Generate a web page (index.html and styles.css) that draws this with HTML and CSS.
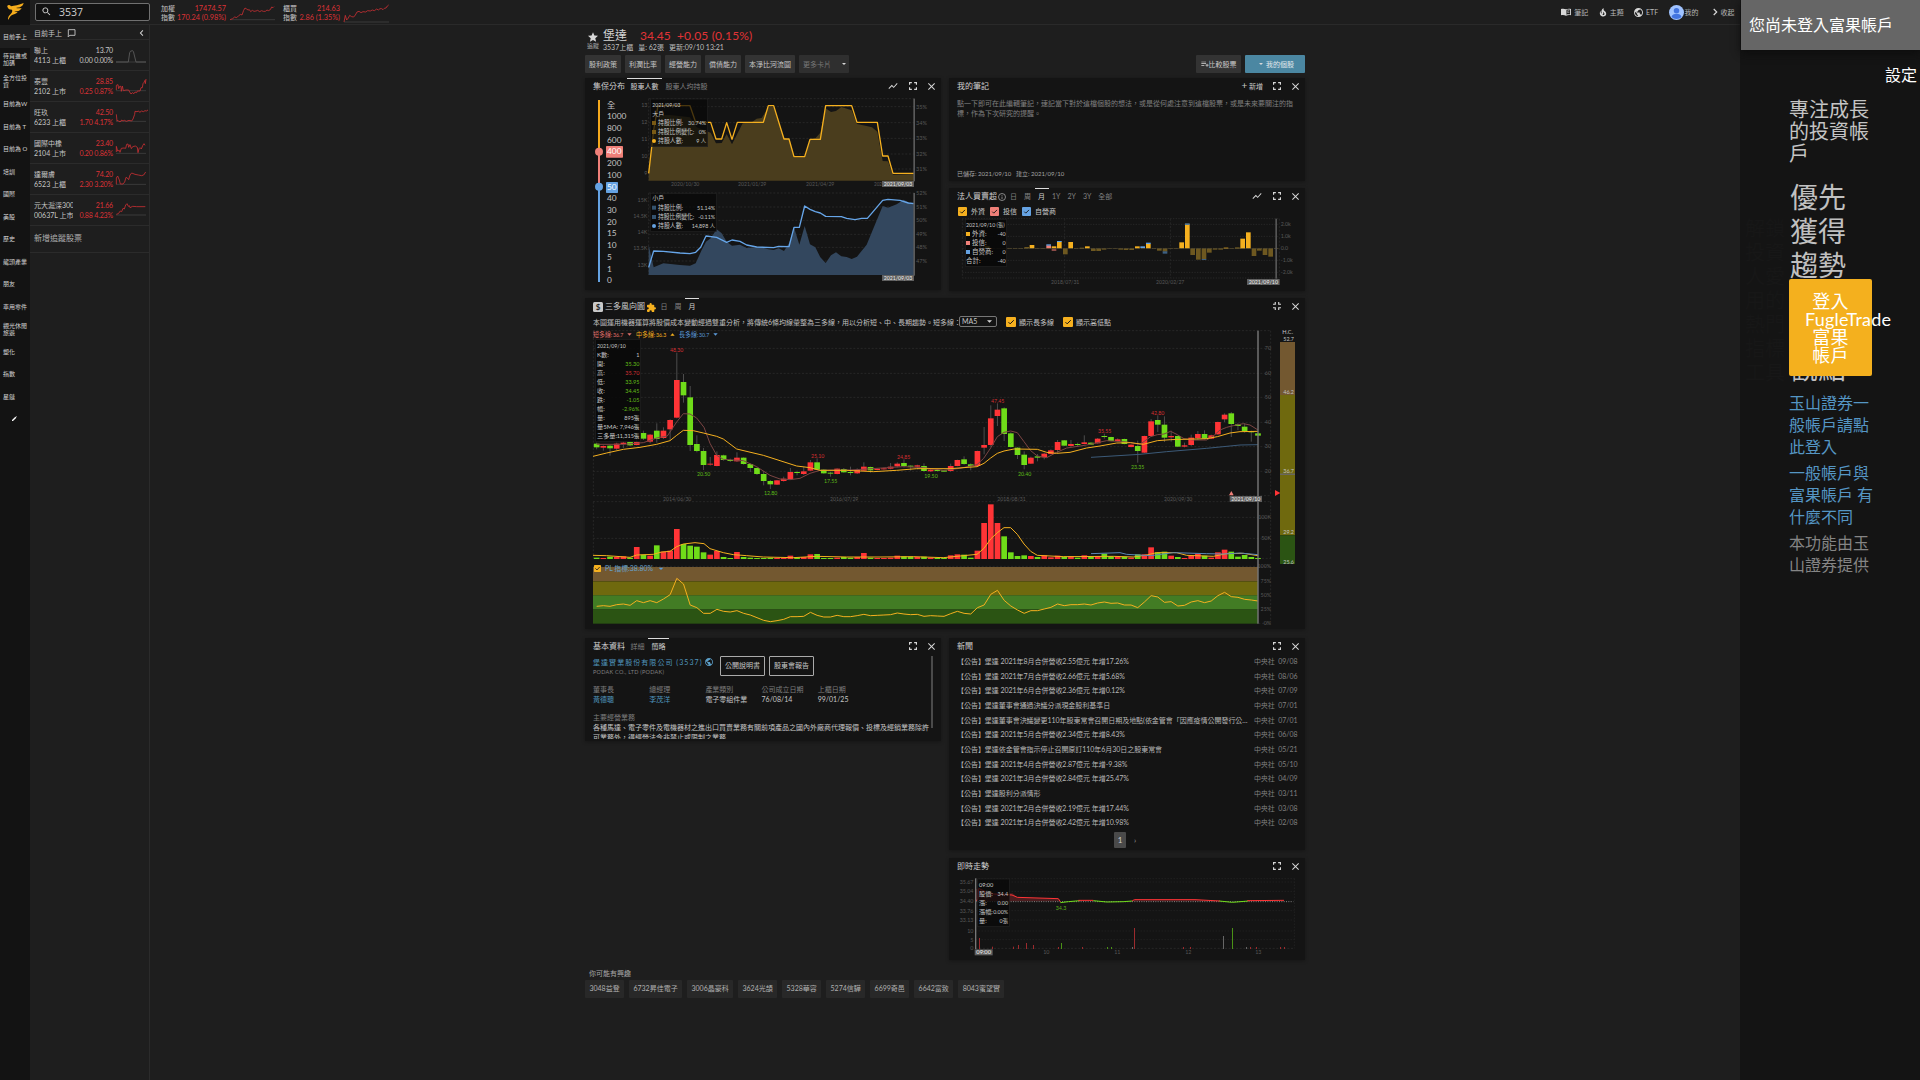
FILE: index.html
```html
<!DOCTYPE html>
<html lang="zh-Hant">
<head>
<meta charset="utf-8">
<title>堡達 3537</title>
<link rel="stylesheet" href="styles.css">
</head>
<body>
<svg class="defs" width="0" height="0">
  <symbol id="i-full" viewBox="5 5 14 14"><path d="M7 14H5v5h5v-2H7v-3zm-2-4h2V7h3V5H5v5zm12 7h-3v2h5v-5h-2v3zM14 5v2h3v3h2V5h-5z"/></symbol>
  <symbol id="i-fullexit" viewBox="5 5 14 14"><path d="M5 16h3v3h2v-5H5v2zm3-8H5v2h5V5H8v3zm6 11h2v-3h3v-2h-5v5zm2-11V5h-2v5h5V8h-3z"/></symbol>
  <symbol id="i-close" viewBox="5 5 14 14"><path d="M19 6.4 17.6 5 12 10.6 6.4 5 5 6.4 10.6 12 5 17.6 6.4 19l5.600-5.600 5.600 5.600 1.400-1.400-5.600-5.600z"/></symbol>
  <symbol id="i-line" viewBox="1 4 22 16"><path d="M3.5 18.500l6-6 4 4L22 6.920l-1.400-1.400-7.100 8-4-4L2 17z"/></symbol>
  <symbol id="i-search" viewBox="2 2 20 20"><path d="M15.500 14h-.8l-.3-.3A6.500 6.500 0 1 0 13.700 14.400l.3.3v.8l5 5 1.500-1.500-5-5zm-6 0a4.500 4.500 0 1 1 0-9 4.500 4.500 0 0 1 0 9z"/></symbol>
  <symbol id="i-globe" viewBox="2 2 20 20"><path d="M12 2C6.480 2 2 6.480 2 12s4.480 10 10 10 10-4.480 10-10S17.520 2 12 2zm-1 17.930c-3.950-.49-7-3.850-7-7.930 0-.62.08-1.210.21-1.790L9 15v1c0 1.100.9 2 2 2v1.930zm6.900-2.540c-.26-.81-1-1.390-1.900-1.390h-1v-3c0-.55-.45-1-1-1H8v-2h2c.55 0 1-.45 1-1V7h2c1.100 0 2-.9 2-2v-.41c2.930 1.190 5 4.060 5 7.410 0 2.080-.8 3.970-2.100 5.390z"/></symbol>
  <symbol id="i-book" viewBox="1 4 22 16"><path d="M12 6C8 4.500 4 4.500 1 5.500v13.500c3-1 7-1 11 1 4-2 8-2 11-1V5.500C20 4.500 16 4.500 12 6zm9 11.500c-3-.6-6-.2-8 .7V7.500c2-.9 5-1.300 8-.7z"/><path d="M14.500 9.500q2.500-.9 5-.6v1.300q-2.500-.3-5 .6zm0 3q2.500-.9 5-.6v1.300q-2.500-.3-5 .6z"/></symbol>
  <symbol id="i-fire" viewBox="2 1 20 22"><path d="M19.480 12.350c-1.570-4.080-7.160-4.300-5.810-10.230.1-.44-.37-.78-.75-.55C9.290 3.710 6.680 8 8.870 13.620c.18.46-.36.89-.75.59-1.810-1.370-2-3.340-1.840-4.750.06-.52-.62-.77-.91-.34C4.690 10.160 4 11.840 4 14.370c.38 5.600 5.110 7.320 6.810 7.540 2.430.31 5.060-.14 6.950-1.870 2.080-1.930 2.840-5.010 1.720-7.690zm-9.280 5.030c1.440-.35 2.180-1.390 2.380-2.310.33-1.430-.96-2.830-.09-5.090.33 1.870 3.270 3.040 3.270 5.080.08 2.530-2.660 4.700-5.560 2.320z"/></symbol>
  <symbol id="i-right" viewBox="6 5 10 14"><path d="M8 7.500 9.500 6l6 6-6 6L8 16.500l4.500-4.500z"/></symbol>
  <symbol id="i-left" viewBox="6 5 10 14"><path d="m14.500 7.500-1.300-1.300L7.500 12l5.700 5.800 1.300-1.300-4.400-4.500z"/></symbol>
  <symbol id="i-star" viewBox="2 2 20 19"><path d="M12 17.270 18.180 21l-1.640-7.030L22 9.240l-7.190-.61L12 2 9.190 8.630 2 9.240l5.460 4.730L5.820 21z"/></symbol>
  <symbol id="i-puzzle" viewBox="2 1 21 21"><path d="M20.500 11H19V7a2 2 0 0 0-2-2h-4V3.500a2.500 2.500 0 0 0-5 0V5H4a2 2 0 0 0-2 2v3.800h1.500a2.700 2.700 0 0 1 0 5.400H2V20c0 1.100.9 2 2 2h3.800v-1.500a2.700 2.700 0 0 1 5.400 0V22H17a2 2 0 0 0 2-2v-4h1.500a2.500 2.500 0 0 0 0-5z"/></symbol>
  <symbol id="i-check" viewBox="0 0 18 18"><rect width="18" height="18" rx="2"/><path d="m4.500 9.300 3 3 6.500-6.500" fill="none" stroke="#141414" stroke-width="1.800"/></symbol>
  <symbol id="i-down" viewBox="0 0 10 5"><path d="M0 0h10L5 5z"/></symbol>
  <symbol id="i-add" viewBox="0 0 24 16"><path d="M1 1h14v2H1zm0 5h14v2H1zm0 5h9v2H1zm16-4h2.200v3.500H23v2h-3.800V16H17v-3.500h-3.500v-2H17z"/></symbol>
</svg>

<div class="app">
  <nav class="rail">
    <div class="logo"><svg width="17" height="17" viewBox="0 0 51 51"><path fill="#f6ad1c" d="M1 8c4-3 8-2 11 2C22 8 36 6 50 0c-1 6-5 10-10 12-5 2-9 2-13 3 6 1 11 1 17 0-3 6-8 9-14 10h-8c3 2 6 2 10 2-5 7-12 7-17 9-6 3-8 10-12 15-1-8 3-13 8-18 4-4 6-9 4-13-7 0-11-2-14-9z"/></svg></div>
    <ul class="groups" id="groups"></ul>
    <svg class="pencil" width="5" height="5" viewBox="0 0 15 15"><path fill="#fff" d="M0 12 10 2l3 3L3 15H0zM11 1l1-1 3 3-1 1z"/></svg>
  </nav>

  <div class="body">
    <header class="topbar">
      <label class="search"><svg width="9" height="9"><use href="#i-search"/></svg><span>3537</span></label>
      <div class="index i1">
        <div class="iname">加權<br>指數</div>
        <div class="ival">17474.57<br>170.24 (0.98%)</div>
        <svg class="spark" width="45" height="18" viewBox="690 8 135 54"><path class="base" d="M690 55h135"/><path class="up" d="M690 55l8-3 6-5 6 2 6-6 6-4 4 2 5-14 4-7 5 3 4 3 4-1 4 6 5-4 5 3 6-1 5-2 6 4 6-3 5 2 6 0 5-4 4 2 6-3 4-8 4 2 3-3"/></svg>
      </div>
      <div class="index i2">
        <div class="iname">櫃買<br>指數</div>
        <div class="ival">214.63<br>2.86 (1.35%)</div>
        <svg class="spark" width="45" height="18" viewBox="1032 8 135 54"><path class="base" d="M1032 62h135"/><path class="up" d="M1032 62l4-20 4 14 5-6 4-8 6 4 6 1 5-6 5-9 6-2 6 4 6-3 8 1 6-4 8 1 6-3 6 2 7-5 5 3 5-4 5 0 4 3 4-4 5-1 4-6 4-3"/></svg>
      </div>
      <div class="menu">
        <a><svg width="10" height="8"><use href="#i-book"/></svg>筆記</a>
        <a><svg width="8" height="9"><use href="#i-fire"/></svg>主題</a>
        <a><svg width="9" height="9"><use href="#i-globe"/></svg>ETF</a>
        <a class="me"><svg width="15" height="15" viewBox="0 0 30 30"><circle cx="15" cy="15" r="15" fill="#a0c3ff"/><circle cx="15" cy="11.500" r="5.500" fill="#4274e0"/><path d="M5 24c1-5 5-6 10-6s9 1 10 6a14 14 0 0 1-20 0z" fill="#4274e0"/></svg>我的</a>
        <a><svg width="6" height="8"><use href="#i-right"/></svg>收起</a>
      </div>
    </header>

    <div class="content">
      <aside class="watch">
        <div class="whead"><span>目前手上</span><svg class="outline" width="9" height="8" viewBox="0 0 27 24" stroke="#ccc" stroke-width="2.600"><path d="M4 2h20v17H9l-6 4 1-4z"/></svg><svg class="back" width="5" height="8"><use href="#i-left"/></svg></div>
        <div id="watch"></div>
        <div class="addstock">新增追蹤股票</div>
      </aside>

      <main class="main">
        <section class="stock">
          <div class="fav"><svg width="10" height="10"><use href="#i-star"/></svg><span>追蹤</span></div>
          <div>
            <div class="quote"><b>堡達</b><em class="p1">34.45</em><em>+0.05 (0.15%)</em></div>
            <div class="sub"><span>3537上櫃</span><span>量: 62張</span><span>更新:09/10 13:21</span></div>
          </div>
        </section>
        <section class="actions">
          <button>股利政策</button><button>利潤比率</button><button>經營能力</button><button>償債能力</button><button class="w50">本淨比河流圖</button>
          <button class="more">更多卡片<svg width="4" height="2"><use href="#i-down"/></svg></button>
          <button class="cmp"><svg width="8" height="6"><use href="#i-add"/></svg>比較股票</button>
          <button class="mine"><svg width="4" height="2"><use href="#i-down"/></svg>我的個股</button>
        </section>

        <section class="cards">
          <article class="card tall">
            <div class="chead"><h2>集保分布</h2><span class="tab on">股東人數</span><span class="tab">股東人均持股</span>
              <div class="tools"><svg width="10" height="8"><use href="#i-line"/></svg><svg width="8" height="8"><use href="#i-full"/></svg><svg width="7" height="7"><use href="#i-close"/></svg></div></div>
            <svg id="holders" width="356" height="195" viewBox="15 225 1068 585"></svg>
          </article>
          <div class="stack">
            <article class="card note">
              <div class="chead"><h2>我的筆記</h2>
                <div class="tools"><span class="plus"><i>+</i> 新增</span><svg width="8" height="8"><use href="#i-full"/></svg><svg width="7" height="7"><use href="#i-close"/></svg></div></div>
              <p>點一下即可在此編輯筆記，速記當下對於這檔個股的想法，或是從何處注意到這檔股票，或是未來要關注的指標，作為下次研究的提醒。</p>
              <div class="saved">已儲存: 2021/09/10 &nbsp; 建立: 2021/09/10</div>
            </article>
            <article class="card inst">
              <div class="chead"><h2>法人買賣超</h2><svg class="info outline" width="8" height="8" viewBox="0 0 16 16" stroke="#aaa" stroke-width="1.500"><circle cx="8" cy="8" r="7"/><path d="M8 7v5M8 4v1.500"/></svg><span class="tab">日</span><span class="tab">周</span><span class="tab on">月</span><span class="tab">1Y</span><span class="tab">2Y</span><span class="tab">3Y</span><span class="tab">全部</span>
                <div class="tools"><svg width="10" height="8"><use href="#i-line"/></svg><svg width="8" height="8"><use href="#i-full"/></svg><svg width="7" height="7"><use href="#i-close"/></svg></div></div>
              <div class="checks"><span><svg class="y" width="9" height="9"><use href="#i-check"/></svg>外資</span><span><svg class="r" width="9" height="9"><use href="#i-check"/></svg>投信</span><span><svg class="b" width="9" height="9"><use href="#i-check"/></svg>自營商</span></div>
              <svg id="inst" width="356" height="74" viewBox="27 591 1068 222"></svg>
            </article>
          </div>
        </section>

        <article class="card wind">
          <div class="chead"><svg class="dollar" width="10" height="10" viewBox="0 0 20 20"><rect width="20" height="20" rx="3" fill="#c9c9c9"/><text x="10" y="15.500" text-anchor="middle" font-size="16" font-weight="700" fill="#222">$</text></svg><h2>三多風向圖</h2><svg class="puz" width="9" height="9"><use href="#i-puzzle"/></svg><span class="tab">日</span><span class="tab">周</span><span class="tab on">月</span>
            <div class="tools"><svg width="8" height="8"><use href="#i-fullexit"/></svg><svg width="7" height="7"><use href="#i-close"/></svg></div></div>
          <div class="desc"><span class="long">本圖運用機器運算將股價成本變動經過雙重分析，將傳統6條均線彙整為三多線，用以分析短、中、長期趨勢。短多線：</span><span class="select">MA5<svg width="5" height="3"><use href="#i-down"/></svg></span><span class="ck"><svg width="10" height="10"><use href="#i-check"/></svg>顯示長多線</span><span class="ck"><svg width="10" height="10"><use href="#i-check"/></svg>顯示高低點</span></div>
          <svg id="wind" width="720" height="301" viewBox="15 114 2160 903"></svg>
        </article>

        <section class="cards lower">
          <article class="card basic">
            <div class="chead"><h2>基本資料</h2><span class="tab">詳細</span><span class="tab on">簡略</span>
              <div class="tools"><svg width="8" height="8"><use href="#i-full"/></svg><svg width="7" height="7"><use href="#i-close"/></svg></div></div>
            <div class="bscroll">
              <div class="co"><div class="cname"><div class="zh">堡達實業股份有限公司 (3537)<svg width="8" height="8"><use href="#i-globe"/></svg></div><div class="en">PODAK CO., LTD (PODAK)</div></div><span class="outl">公開說明書</span><span class="outl">股東會報告</span></div>
              <dl><div><dt>董事長</dt><dd class="lnk">黃德聰</dd></div><div><dt>總經理</dt><dd class="lnk">李茂洋</dd></div><div><dt>產業類別</dt><dd>電子零組件業</dd></div><div><dt>公司成立日期</dt><dd>76/08/14</dd></div><div><dt>上櫃日期</dt><dd>99/01/25</dd></div></dl>
              <h3>主要經營業務</h3>
              <p>各種馬達、電子零件及電機器材之進出口買賣業務有關前項產品之國內外廠商代理報價、投標及經銷業務除許可業務外，得經營法令非禁止或限制之業務</p>
              <i class="bar"></i>
            </div>
          </article>
          <div class="stack">
            <article class="card news">
              <div class="chead"><h2>新聞</h2>
                <div class="tools"><svg width="8" height="8"><use href="#i-full"/></svg><svg width="7" height="7"><use href="#i-close"/></svg></div></div>
              <ul id="news"></ul>
              <div class="pager"><b>1</b><span>›</span></div>
            </article>
            <article class="card live">
              <div class="chead"><h2>即時走勢</h2>
                <div class="tools"><svg width="8" height="8"><use href="#i-full"/></svg><svg width="7" height="7"><use href="#i-close"/></svg></div></div>
              <svg id="live" width="356" height="85" viewBox="27 165 1068 255"></svg>
            </article>
          </div>
        </section>

        <section class="related"><h4>你可能有興趣</h4><div><a>3048益登</a><a>6732昇佳電子</a><a>3006晶豪科</a><a>3624光頡</a><a>5328華容</a><a>5274信驊</a><a>6699奇邑</a><a>6642富致</a><a>8043蜜望實</a></div></section>
      </main>
    </div>
  </div>

  <aside class="login">
    <div class="notice">您尚未登入富果帳戶</div>
    <div class="setting">設定</div>
    <div class="slides">
      <div class="prev">解鎖投資人愛用的熱門指標工具</div>
      <div class="slide">
        <div class="lead">專注成長的投資帳戶</div>
        <div class="big">優先獲得趨勢產業投資觀點</div>
        <a class="cta">登入 FugleTrade 富果帳戶</a>
      </div>
    </div>
    <div class="links"><p>玉山證券一般帳戶請點此登入</p><p>一般帳戶與富果帳戶 有什麼不同</p><p class="dim">本功能由玉山證券提供</p></div>
  </aside>
</div>
<script src="script.js"></script>
</body>
</html>
```
FILE: styles.css
```css
* { box-sizing: border-box; margin: 0; padding: 0; }
body { width: 1920px; height: 1080px; overflow: hidden; background: #1e1e1e; color: #c6c6c6; font: 7px/10px Lato, "Noto Sans CJK TC", sans-serif; }
svg { display: block; flex: none; fill: #d8d8d8; overflow: visible; }
svg.outline { fill: none; }
ul { list-style: none; }
.defs { position: absolute; }
.app { display: flex; height: 1080px; }

.rail { width: 30px; background: #131313; flex: none; }
.logo { height: 25px; padding: 3px 0 0 7px; background: #111; }
.groups li { height: 22.5px; padding-left: 3px; display: flex; align-items: center; font-size: 6px; line-height: 7px; color: #d2d2d2; }
.groups li:first-child { background: #1e1e1e; }
.groups span { width: 24.5px; word-break: break-all; }
.pencil { margin: 8px 0 0 12px; }

.body { width: 1710px; flex: none; }
.topbar { height: 25px; border-bottom: 1px solid #2a2a2a; display: flex; align-items: center; }
.search { width: 115px; height: 18px; margin: 0 0 1px 5px; border: 1px solid #707070; border-radius: 2px; background: #111; display: flex; align-items: center; padding-left: 6px; gap: 8px; font: 10.5px "Noto Sans", sans-serif; }
.index { display: flex; line-height: 9px; align-items: center; padding-top: 1px; }
.i1 { margin-left: 11px; }
.i2 { margin-left: 8px; }
.iname { width: 15px; }
.ival { text-align: right; color: #dc3236; width: 50px; font-size: 7.300px; white-space: nowrap; }
.i2 .ival { width: 42px; }
.spark { margin-left: 4px; fill: none; }
.spark .base { stroke: #3a3a3a; stroke-width: 3; }
.spark .up { stroke: #c72f33; stroke-width: 2.500; }
.spark .flat { stroke: #555; stroke-width: 3; }
.menu { margin-left: auto; display: flex; gap: 10.400px; padding-right: 5.500px; color: #b8b8b8; }
.menu a { display: flex; align-items: center; gap: 3px; }
.menu .me { gap: 1px; margin-right: 2.500px; }

.content { display: flex; height: 1055px; }
.watch { width: 120px; border-right: 1px solid #2b2b2b; flex: none; }
.whead { height: 15px; border-bottom: 1px solid #2b2b2b; padding: 2px 5px 0 4px; display: flex; align-items: center; gap: 5px; }
.whead .back { margin-left: auto; }
.wrow { height: 31px; border-bottom: 1px solid #2b2b2b; display: flex; align-items: center; padding-left: 4px; }
.wname { width: 39px; white-space: nowrap; overflow: hidden; }
.wval { width: 40px; text-align: right; white-space: nowrap; letter-spacing: -.15px; }
.wval.r { color: #dc3236; }
.wrow .spark { margin-left: 3px; }
.addstock { height: 27px; border-bottom: 1px solid #2b2b2b; line-height: 25px; padding-left: 4px; font-size: 8px; color: #b0b0b0; }

.main { width: 720px; margin-left: 435px; }
.stock { height: 30px; display: flex; padding-top: 4px; }
.fav { width: 18px; padding: 3px 0 0 3px; font-size: 6px; line-height: 7px; white-space: nowrap; color: #aaa; }
.fav span { margin-left: -1px; }
.quote { height: 14px; line-height: 14px; font-size: 12px; display: flex; }
.quote b { font-weight: 400; width: 37px; color: #d4d4d4; }
.quote em { font-style: normal; color: #e23336; letter-spacing: .15px; }
.quote .p1 { width: 37px; letter-spacing: 0; }
.sub { display: flex; gap: 5px; line-height: 9px; color: #bdbdbd; }
.actions { display: flex; gap: 4px; height: 18px; }
.actions button { width: 36px; height: 18px; border: 0; border-radius: 1px; background: #333; color: #c8c8c8; font: inherit; display: flex; align-items: center; justify-content: center; white-space: nowrap; }
.actions .w50 { width: 50px; }
.actions .more { width: 50px; justify-content: space-between; padding: 0 3px 0 4px; color: #777; background: #2f2f2f; }
.actions .cmp { width: 45px; margin-left: auto; }
.actions .mine { width: 60px; background: #4b87a2; gap: 3px; padding-left: 3px; color: #e0e8ec; }

.cards { display: flex; gap: 8px; margin-top: 5px; }
.stack { display: flex; flex-direction: column; }
.card { background: #141414; box-shadow: 0 1px 3px #161616; width: 356px; overflow: hidden; }
.tall { height: 212px; }
.note { height: 103px; margin-bottom: 7px; display: flex; flex-direction: column; }
.note p { padding: 0 10px 0 8px; line-height: 10px; color: #808080; margin-top: 3px; }
.saved { margin: auto 8px 2px; font-size: 6px; color: #a4a4a4; }
.inst { height: 103px; }
.chead { height: 17px; display: flex; padding-left: 8px; line-height: 16px; }
.chead h2 { font-size: 8px; font-weight: 400; color: #cfcfcf; margin-right: 2px; }
.tab { padding: 0 3.500px; color: #808080; border-top: 1px solid transparent; line-height: 15px; white-space: nowrap; }
.tab.on { color: #d0d0d0; border-top-color: #ddd; }
.tools { margin-left: auto; display: flex; align-items: center; gap: 11px; padding-right: 6px; height: 16px; }
.plus { line-height: 16px; color: #c8c8c8; margin-right: -1px; }
.plus i { font: 10px/12px Lato, sans-serif; }
.info { margin: 5px .5px 0 -1px; }
.checks { display: flex; gap: 5px; height: 12px; align-items: center; padding-left: 9px; font-size: 7px; }
.checks span { display: flex; align-items: center; gap: 4px; }
.y { fill: #f5b01f; } svg.r { fill: #f08079; } .b { fill: #65a2e2; }
.wind { width: 720px; height: 331px; margin-top: 7px; }
.dollar { margin: 4px 2px 0 0; }
.puz { margin: 5px 1px 0 0; fill: #f5b01f; }
.desc { height: 13px; display: flex; align-items: center; padding: 0 8px; }
.long { width: 366px; white-space: nowrap; color: #c0c0c0; }
.select { width: 38px; height: 11px; border: 1px solid #777; border-radius: 2px; display: flex; align-items: center; justify-content: space-between; padding: 0 4px 0 2px; margin-right: 9px; line-height: 9px; }
.ck { width: 57px; display: flex; align-items: center; gap: 3px; }
.ck svg { fill: #f5b01f; }

.lower { margin-top: 9px; align-items: flex-start; }
.basic { height: 103px; }
.bscroll { position: relative; height: 84px; overflow: hidden; padding: 1px 12px 0 8px; }
.co { display: flex; gap: 4px; }
.cname { width: 123px; }
.zh { color: #4f94bd; letter-spacing: 1.050px; font-size: 7px; white-space: nowrap; display: flex; gap: 2px; line-height: 12px; align-items: center; }
.zh svg { fill: #5b9ec7; }
.en { font-size: 5.500px; color: #808080; line-height: 8px; letter-spacing: .25px; }
.outl { width: 45px; height: 20px; border: 1px solid #aaa; border-radius: 1px; text-align: center; line-height: 17px; }
dl { display: flex; margin-top: 8px; }
dl div { width: 56.200px; white-space: nowrap; }
dt, h3 { color: #7d7d7d; font-weight: 400; font-size: 7px; }
.lnk { color: #4f94bd; }
h3 { margin-top: 8px; }
.bscroll p { white-space: normal; margin-right: -3px; }
.bar { position: absolute; right: 8px; top: 1px; width: 2px; height: 72px; background: #4a4a4a; }
.news { height: 212px; margin-bottom: 8px; }
.news li { height: 14.670px; line-height: 13px; display: flex; padding: 0 7.500px 0 8px; justify-content: space-between; color: #b9b9b9; letter-spacing: -.04px; }
.news li span:first-child { width: 294px; white-space: nowrap; overflow: hidden; text-overflow: ellipsis; }
.news li span:last-child { color: #808080; white-space: nowrap; }
.pager { display: flex; padding-left: 165px; gap: 8px; line-height: 16px; font-size: 8px; margin-top: 1px; color: #999; }
.pager b { width: 12px; height: 16px; background: #4a4a4a; border-radius: 1px; text-align: center; font-weight: 400; color: #ccc; }
.live { height: 102px; }
.related h4 { font-weight: 400; font-size: 7px; margin: 8px 0 2px 4px; color: #a8a8a8; }
.related div { display: flex; gap: 5px; }
.related a { height: 18px; line-height: 17px; padding: 0 4.400px; background: #282828; border-radius: 1px; white-space: nowrap; color: #b0b0b0; }

.login { width: 180px; background: #141414; flex: none; color: #fff; font-size: 16px; padding-left: 1px; }
.notice { height: 50px; background: #666; line-height: 50px; padding-left: 8px; box-shadow: 0 3px 8px #0d0d0d; }
.setting { text-align: right; line-height: 22px; margin: 14px 3px 0 0; }
.slides { display: flex; height: 294px; margin-top: 12px; }
.prev { width: 40px; margin: 118px 4px 0 4px; font-size: 20px; line-height: 24px; color: #171717; }
.slide { width: 83px; position: relative; }
.lead { font-size: 20px; line-height: 22px; color: #c4c4c4; word-break: break-all; }
.big { width: 62px; font-size: 28px; line-height: 34.200px; margin: 16px 0 0 1px; color: #c0c0c0; }
.cta { position: absolute; top: 181px; left: 0; width: 83px; height: 97px; padding: 13px 16px; background: #f4b01e; border-radius: 2px; font-size: 18px; line-height: 18px; letter-spacing: .2px; text-align: center; color: #fff; }
.links { width: 87px; margin-left: 48px; line-height: 22px; color: #5596c4; }
.links p { margin-bottom: 4px; }
.links .dim { color: #858585; }
```
FILE: script.js
```js
const $ = id => document.getElementById(id);
const RED = '#ff3436', GREEN = '#6fdc19', YEL = '#f5b01f', BLUE = '#65a2e2';

/* Chart units are thirds of a CSS pixel. */
const T = (s, x, y, o = {}) => `<text x="${x}" y="${y + (o.f || 16) * .35}" font-size="${o.f || 16}" fill="${o.c || '#585858'}" text-anchor="${o.a || 'start'}"${o.w ? ` textLength="${o.w}" lengthAdjust="spacingAndGlyphs"` : ''}>${s}</text>`;
const R = (x, y, w, h, c, e = '') => `<rect x="${x}" y="${y}" width="${w}" height="${h}" fill="${c}" ${e}/>`;
const H = (y, a, b, dash = '6 5') => `<path d="M${a} ${y}H${b}" stroke="#272727" stroke-width="3" stroke-dasharray="${dash}"/>`;
const V = (x, a, b, c = '#272727', w = 3, dash = '6 5') => `<path d="M${x} ${a}V${b}" stroke="${c}" stroke-width="${w}" stroke-dasharray="${dash}"/>`;
const L = (p, c, w = 3) => `<polyline points="${p}" fill="none" stroke="${c}" stroke-width="${w}" stroke-linejoin="round"/>`;
const tag = (s, x, y, w, h = 18) => R(x, y, w, h, '#5f5f5f') + T(s, x + w / 2, y + h / 2, { a: 'middle', c: '#eee', w: w - 10 });

$('groups').innerHTML = ['目前手上', '待買進或加碼', '全方位投資', '目前為W', '目前為 T', '目前為 O', '培訓', '國際', '美股', '歷史', '龍頭產業', '朋友', '車用零件', '觀光休閒旅遊', '塑化', '指數', '星鏈'].map(s => `<li><span>${s}</span></li>`).join('');

$('watch').innerHTML = [
  ['聯上', '4113 上櫃', '13.70', '0.00 0.00%', '', 'M348 46H385L389 18Q390 12 398 12Q401 14 402 22L408 46H438', 46],
  ['泰豐', '2102 上市', '28.85', '0.25 0.87%', 'r', 'M349 37V23l5-2 2 12 4-8 3 2 1 14 3-16 3 14 8-2 8 0 3 6 4 6 4-4 5 3 3-5 5 2 2-5 8 0 3-10 4 0 2-12 3-4 3-6 1 10 2-14', 39],
  ['旺玖', '6233 上櫃', '42.50', '1.70 4.17%', 'r', 'M349 17l2 20 3-2 3 4 6-1 2-4 4 3 4-2 6 3 8-3 8 2 4-6 5-14 1-9 6 1 5-2 3 4 6-4 5 2 5-3 4 1 5-3', 38],
  ['國際中橡', '2104 上市', '23.40', '0.20 0.86%', 'r', 'M349 37v-17l4 14 5-2 2 6 4-12 8-1 5 1 3-12 4-1 2 10 4-8 4 12 4-6 8-2 6 4 2 16 3-12 3-3 4 4 4-10 4-6 3 5', 41],
  ['達爾膚', '6523 上櫃', '74.20', '2.30 3.20%', 'r', 'M349 41V22l4-6 5 12 3 12h8l5-6 4-14 4 2 4 5 4-14 5-6 10 4 10 2 10 2 6-2 4-6 2-3', 41],
  ['元大滬深300正2', '00637L 上市', '21.66', '0.88 4.23%', 'r', 'M349 38l6-2 6-8 4 2 4-10 4 2 4-12 4-4 4 8 3-2 2 6 8-4 12 1h26', 40]
].map(r => `<div class="wrow"><div class="wname">${r[0]}<br>${r[1]}</div><div class="wval ${r[4]}">${r[2]}<br>${r[3]}</div><svg class="spark" width="30" height="18" viewBox="348 -2 90 54"><path class="base" d="M348 ${r[6]}h90"/><path class="${r[4] ? 'up' : 'flat'}" d="${r[5]}"/></svg></div>`).join('');

$('news').innerHTML = [
  ['堡達 2021年8月合併營收2.55億元 年增17.26%', '09/08'], ['堡達 2021年7月合併營收2.66億元 年增5.68%', '08/06'],
  ['堡達 2021年6月合併營收2.36億元 年增0.12%', '07/09'], ['堡達董事會通過決議分派現金股利基準日', '07/01'],
  ['堡達董事會決議變更110年股東常會召開日期及地點(依金管會「因應疫情公開發行公司股東會延期召開」)', '07/01'],
  ['堡達 2021年5月合併營收2.34億元 年增8.43%', '06/08'], ['堡達依金管會指示停止召開原訂110年6月30日之股東常會', '05/21'],
  ['堡達 2021年4月合併營收2.87億元 年增-9.38%', '05/10'], ['堡達 2021年3月合併營收2.84億元 年增25.47%', '04/09'],
  ['堡達股利分派情形', '03/11'], ['堡達 2021年2月合併營收2.19億元 年增17.44%', '03/08'], ['堡達 2021年1月合併營收2.42億元 年增10.98%', '02/08']
].map(r => `<li><span>【公告】${r[0]}</span><span>中央社 &nbsp;${r[1]}</span></li>`).join('');

/* Shareholder distribution */
{
  let s = R(54, 240, 6, 156, '#f5a91c') + R(54, 396, 6, 104, '#f08079') + R(54, 500, 6, 286, '#65a2e2')
    + '<circle cx="57" cy="395" r="12" fill="#f08079"/><circle cx="57" cy="500" r="12" fill="#65a2e2"/>'
    + R(78, 378, 51, 35, '#f08079', 'rx="2"') + R(78, 486, 36, 33, '#65a2e2', 'rx="2"');
  [['全', 256], [1000, 288], [800, 324], [600, 360], [400, 394], [200, 429], [100, 465], [50, 501], [40, 534], [30, 570], [20, 606], [15, 639], [10, 675], [5, 711], [1, 747], [0, 780]]
    .forEach(([t, y]) => s += T(t, 81, y, { f: 25, c: t === 400 || t === 50 ? '#fff' : '#c4c4c4' }));
  [236, 260, 308, 355, 402, 447].forEach(y => s += H(y, 206, 1008));
  [519, 561, 601, 643, 682, 723].forEach(y => s += H(y, 206, 1008));
  s += V(206, 236, 482) + V(206, 519, 765);
  const big = '206,460 221,330 234,257 330,257 347,307 392,307 408,357 425,357 440,308 456,358 472,307 550,307 565,257 581,257 612,357 627,357 642,410 674,410 690,358 721,358 737,257 815,257 831,307 892,307 908,408 924,408 939,460 1003,460';
  s += `<polygon fill="#4a3d1d" points="206,482 206,462 221,330 240,286 270,285 330,292 350,322 392,338 408,370 425,369 440,342 456,373 488,310 515,307 530,296 545,294 565,262 581,260 612,355 627,358 642,412 674,411 690,358 706,355 721,338 737,265 753,276 768,273 784,261 815,271 831,312 860,318 876,322 892,335 908,423 924,424 939,464 1003,462 1003,482"/>` + L(big, YEL, 4);
  s += `<polygon fill="#33475e" points="206,765 206,675 221,742 250,730 300,735 330,737 347,730 365,690 378,665 392,655 410,628 425,640 440,665 456,677 480,674 500,684 540,681 565,688 581,690 596,685 612,693 627,670 642,622 658,674 674,618 690,673 706,682 721,712 737,729 753,706 768,697 784,709 800,711 815,717 831,710 860,674 876,635 908,558 924,563 950,553 971,539 990,550 1003,548 1003,765"/>`
    + L('206,742 221,693 250,694 300,699 330,701 347,697 362,682 378,648 410,652 440,667 456,660 480,664 500,675 530,681 581,683 596,679 627,680 642,622 658,622 674,558 690,568 706,575 721,579 737,589 784,590 800,595 825,599 845,595 862,595 880,574 908,541 924,538 960,541 985,549 1003,551', '#66a5e8', 4);
  [[13, 255], [12, 306], [11, 356], [10, 408], [9, 459]].forEach(([t, y]) => s += T(t, 202, y, { a: 'end' }));
  [['15K', 540], ['14.5K', 588], ['14K', 635], ['13.5K', 684], ['13K', 735]].forEach(([t, y]) => s += T(t, 202, y, { a: 'end' }));
  [[35, 261], [34, 309], [33, 355], [32, 402], [31, 447], [52, 519], [51, 561], [50, 600], [49, 641], [48, 681], [47, 722]].forEach(([t, y]) => s += T(t + '%', 1008, y, { w: 33 }));
  [['2020/10/30', 273], ['2021/01/29', 474], ['2021/04/29', 678]].forEach(([t, x]) => s += T(t, x, 492, { w: 85 }));
  s += T('202', 882, 492, { w: 24 });
  s += R(1000, 236, 5, 248, '#5a5a5a') + R(1000, 519, 5, 248, '#5a5a5a') + tag('2021/09/03', 906, 483, 96) + tag('2021/09/03', 906, 765, 96);
  const box = (x, y, w, h) => R(x, y, w, h, 'rgba(8,8,8,.72)', 'stroke="#222" stroke-width="2"');
  s += box(211, 237, 172, 143) + T('2021/09/03', 217, 255, { c: '#c8c8c8', w: 84 }) + T('大戶', 217, 281, { f: 18, c: '#c8c8c8' });
  const row = (y, c, l, v, e, dot) => (dot ? `<circle cx="222" cy="${y}" r="6" fill="${c}"/>` : R(216, y - 6, 12, 12, c)) + T(l, 234, y, { f: 19, c: '#c8c8c8', w: l.length > 6 ? 109 : 75 }) + T(v, e, y, { a: 'end', c: '#c8c8c8' });
  s += row(309, '#7a5a14', '持股比例:', '30.74%', 378) + row(336, '#7a5a14', '持股比例變化:', '0%', 378) + row(363, YEL, '持股人數:', '9 人', 378, 1);
  s += box(211, 520, 198, 114) + T('小戶', 217, 535, { f: 18, c: '#c8c8c8' }) + row(563, '#34536f', '持股比例:', '51.14%', 405) + row(591, '#34536f', '持股比例變化:', '-0.11%', 405) + row(618, BLUE, '持股人數:', '14,898 人', 405, 1);
  $('holders').innerHTML = s;
}

/* Institutional net buy */
{
  let s = '';
  [596, 613, 649, 685, 721, 757, 774].forEach(y => s += H(y, 67, 1018, '4 4'));
  [67, 374, 691, 1018].forEach(x => s += V(x, 596, 774));
  const d = '#6e5820';
  [[142, 678, 8, YEL], [260, 681, 4, d], [276, 675, 10, YEL], [326, 676, 9, '#f08079'], [326, 673, 4, BLUE], [342, 679, 6, YEL], [342, 686, 7, '#8c4b47'], [358, 665, 20, YEL], [358, 663, 3, BLUE], [376, 686, 17, d], [392, 666, 19, YEL], [442, 679, 6, YEL], [426, 683, 3, d], [460, 686, 7, d], [476, 686, 7, d], [492, 686, 3, d], [542, 686, 3, d], [558, 686, 4, d], [575, 686, 4, d], [592, 679, 6, YEL], [608, 679, 5, BLUE], [625, 671, 14, YEL], [625, 668, 4, BLUE], [658, 686, 6, d], [675, 686, 9, d], [675, 694, 7, '#3d6083'], [725, 667, 18, YEL], [742, 613, 72, YEL], [742, 610, 5, '#557994'], [758, 686, 19, d], [775, 686, 33, d], [792, 686, 31, d], [792, 717, 3, '#3d6083'], [808, 686, 12, d], [825, 686, 3, d], [842, 686, 3, d], [858, 683, 3, YEL], [892, 682, 4, d], [908, 656, 30, YEL], [925, 637, 48, YEL], [942, 686, 22, d], [958, 686, 6, d], [975, 686, 19, d], [992, 686, 24, d]]
    .forEach(([x, y, h, c]) => s += R(x - 7, y, 14, h, c));
  for (let x = 92; x < 1010; x += 16.670) s += R(x - 7, 684, 14, 2, '#5c5030');
  [['2.0k', 612], ['1.0k', 648], ['0.0', 685], ['-1.0k', 720], ['-2.0k', 757]].forEach(([t, y]) => s += T(t, 1022, y));
  s += T('2018/07/31', 333, 786, { w: 85 }) + T('2020/02/27', 648, 786, { w: 85 }) + R(1006, 596, 5, 180, '#555') + tag('2021/09/10', 921, 777, 98);
  s += R(76, 598, 124, 141, 'rgba(8,8,8,.88)', 'stroke="#222" stroke-width="2"') + T('2021/09/10 (張)', 78, 615, { c: '#c8c8c8', w: 116 });
  [['外資:', '-40', 642, YEL], ['投信:', '0', 669, '#f08079'], ['自營商:', '0', 696, BLUE]].forEach(([l, v, y, c]) => s += R(78, y - 6, 12, 12, c) + T(l, 96, y, { f: 19.500, c: '#c8c8c8' }) + T(v, 197, y, { a: 'end', c: '#c8c8c8' }));
  s += T('合計:', 78, 723, { f: 19.500, c: '#c8c8c8' }) + T('-40', 197, 723, { a: 'end', c: '#c8c8c8' });
  $('inst').innerHTML = s;
}

/* Monthly candles: colour, open/close span, wick span */
{
  const K = `g461,472,458,478 r468,473,466,482 g467,475,465,497 r461,476,458,480 r458,462,455,474 g456,466,455,468 r456,465,430,466 g429,446,422,450 r434,455,432,460 g422,447,400,458 r422,444,412,447 r390,418,388,450 r270,383,188,385 g276,316,252,338 g322,465,288,483 g462,483,436,487 g483,525,474,540 r521,524,501,527 r495,528,484,529 g496,510,494,512 g510,513,506,516 r503,514,487,516 g503,522,502,524 g522,534,520,546 g534,552,532,555 g552,573,543,586 g573,583,570,597 r571,584,570,585 r566,573,560,575 r546,567,534,568 g546,549,542,556 r544,552,531,555 r517,542,510,543 g517,539,505,540 g539,550,538,551 g548,551,545,560 r536,552,535,553 g537,547,534,548 g546,549,530,556 r540,550,535,552 r530,542,517,543 g531,541,530,548 r536,540,535,541 r535,538,533,539 r530,536,519,538 r521,529,517,532 g519,528,508,533 g527,530,526,542 r526,530,524,538 g528,543,520,545 r539,544,538,546 g540,543,538,545 g541,545,540,546 r528,543,521,546 r510,528,509,529 g508,522,499,524 g523,528,520,541 r483,528,482,529 r465,473,411,493 r385,465,346,470 r359,378,340,408 g355,432,352,453 g430,471,427,473 g473,495,472,507 g494,525,484,538 r503,521,500,522 g499,503,492,514 r491,502,488,508 r481,492,478,493 r456,480,450,488 g451,467,450,468 r462,468,450,470 g462,465,458,468 r457,462,436,463 g458,464,457,465 r446,460,444,461 g438,441,431,446 g441,453,440,454 r448,453,445,456 g447,462,446,463 r464,471,463,472 g468,483,452,518 r438,488,437,489 r394,438,387,440 g390,404,376,426 g404,443,379,456 r438,442,422,455 g438,470,437,471 r466,470,458,472 r443,465,434,468 r432,444,423,450 g432,446,421,448 r436,446,434,447 r396,433,395,434 r374,388,370,396 g370,402,366,441 g403,408,400,420 g410,423,400,428 g424,427,422,455 g430,437,428,438`.split(' ');
  const vol = [803, 804, 800, 801, 799, 803, 771, 794, 797, 766, 785, 782, 717, 762, 767, 770, 787, 794, 783, 801, 804, 786, 801, 803, 804, 804, 803, 804, 804, 797, 802, 801, 793, 792, 804, 804, 803, 801, 803, 801, 789, 803, 804, 804, 803, 797, 799, 800, 801, 800, 803, 804, 803, 796, 793, 794, 803, 782, 699, 643, 699, 739, 787, 798, 796, 798, 801, 796, 802, 797, 800, 799, 803, 796, 801, 798, 791, 799, 799, 800, 803, 793, 793, 772, 787, 785, 797, 801, 804, 797, 791, 797, 803, 787, 779, 785, 800, 795, 801, 804];
  const pl = [949, 947, 949, 944, 942, 946, 932, 938, 932, 938, 927, 914, 865, 882, 945, 953, 970, 970, 958, 964, 966, 962, 970, 975, 983, 991, 995, 992, 988, 980, 980, 979, 967, 976, 981, 981, 976, 980, 980, 977, 973, 977, 976, 975, 974, 969, 972, 974, 973, 979, 977, 978, 979, 971, 964, 970, 972, 953, 945, 913, 901, 931, 948, 960, 970, 962, 962, 957, 952, 942, 947, 944, 944, 942, 945, 939, 936, 940, 939, 945, 945, 953, 936, 917, 921, 937, 935, 948, 946, 936, 932, 938, 933, 917, 907, 920, 922, 928, 930, 933];
  const X = i => 50 + 20.040 * i;
  let s = '';
  [122, 175, 250, 322, 397, 470, 544, 617, 635, 682, 745, 829].forEach(y => s += H(y, 39, 2072));
  s += V(40, 122, 617) + V(40, 635, 806) + V(2072, 122, 617) + V(2072, 635, 806) + V(2072, 829, 1000) + H(1000, 2035, 2072) + H(805, 2035, 2072);
  [[831, '#735830'], [874, '#6f690e'], [916, '#427c24'], [958, '#2b5413']].forEach(([y, c], i) => s += R(39, y, 1995, i === 3 ? 43 : 42.500, c));
  K.forEach((k, i) => {
    const [a, b, h, l] = k.slice(1).split(','), c = k[0] === 'r' ? RED : GREEN;
    s += V(X(i), h, l, '#4c4c4c', 3, 'none') + R(X(i) - 8.500, a, 17, b - a, c) + R(X(i) - 8.500, vol[i], 17, 807 - vol[i], c);
  });
  s += L('50,463 130,463 190,458 230,444 262,438 290,396 310,371 330,372 350,384 372,412 390,460 410,496 430,508 490,512 530,530 570,556 600,567 630,569 660,565 690,550 720,541 760,540 810,540 860,537 920,533 970,530 1030,533 1090,541 1140,535 1191,524 1211,505 1232,474 1252,440 1272,427 1292,423 1312,428 1332,455 1352,482 1372,498 1400,503 1430,487 1460,474 1520,465 1580,452 1640,456 1680,463 1712,440 1732,434 1752,432 1772,424 1792,434 1812,446 1840,450 1880,450 1900,438 1920,420 1940,412 1960,407 1990,401 2010,405 2034,420', '#7c4543')
    + L('39,499 80,489 130,478 180,472 230,463 270,452 290,436 310,421 340,422 370,429 410,439 430,447 470,477 550,496 600,512 650,528 690,533 720,541 800,541 880,545 950,541 1010,536 1110,536 1191,530 1212,520 1232,504 1252,490 1272,483 1302,477 1372,478 1400,487 1430,490 1470,487 1520,474 1560,468 1610,459 1652,458 1690,463 1732,452 1772,449 1880,446 1912,440 1950,429 1980,425 2034,424', YEL)
    + L('1533,502 1680,493 1760,485 1880,475 1980,465 2034,464', '#3c5a78')
    + L('39,796 80,797 150,802 170,795 220,793 245,786 270,784 290,770 310,762 345,758 372,761 390,776 430,788 460,794 500,797 550,801 640,803 710,799 800,801 900,801 1000,800 1090,803 1191,793 1212,775 1232,747 1252,728 1272,713 1292,713 1312,733 1332,762 1352,784 1372,796 1450,800 1600,799 1660,801 1700,795 1730,788 1790,788 1820,796 1900,799 1940,791 1990,790 2034,797', YEL)
    + L('1533,791 1620,788 1640,793 1712,797 1780,788 1880,791 1930,792 1980,789 2034,794', '#5b86b4') + L(pl.map((y, i) => X(i) + ',' + y).join(' '), YEL);
  [['48.30', 290, 181, 0], ['25.10', 713, 499, 0], ['24.85', 971, 502, 0], ['47.45', 1253, 333, 0], ['35.55', 1574, 423, 0], ['42.80', 1733, 370, 0], ['20.50', 371, 552, 1], ['12.80', 572, 609, 1], ['17.55', 752, 573, 1], ['19.50', 1053, 559, 1], ['20.40', 1334, 552, 1], ['23.35', 1673, 531, 1]]
    .forEach(([t, x, y, g]) => s += T(t, x, y, { a: 'middle', c: g ? '#5fbe18' : '#d42f33', w: 40 }));
  [['2014/06/30', 249, 627], ['2016/07/29', 750, 627], ['2018/08/31', 1252, 627], ['2020/09/30', 1752, 627]].forEach(([t, x, y]) => s += T(t, x, y, { w: 85 }));
  [[70, 174], [60, 249], [50, 321], [40, 396], [30, 469], [20, 543], ['100K', 681], ['50K', 744], ['100%', 828], ['75%', 873], ['50%', 915], ['25%', 957], ['0%', 999]].forEach(([t, y]) => s += T(t, 2073, y, { a: 'end' }));
  s += R(2031, 122, 6, 879, 'rgba(120,120,120,.7)') + tag('2021/09/10', 1949, 618, 97) + '<path d="M1947 616l7-13 7 13z" fill="#f08079"/><path d="M2085 600l16 9-16 9z" fill="#ff3436"/>';
  s += R(2100, 156, 45, 159, '#735830') + R(2100, 315, 45, 421, '#6f690e') + R(2100, 736, 45, 86, '#2b5413') + R(2100, 551, 45, 3, '#66668a');
  [['H.C.', 126, 2139], ['52.7', 147, 2142], ['46.2', 306, 2142], ['36.7', 543, 2142], ['29.2', 726, 2142], ['25.6', 816, 2142]].forEach(([t, y, x]) => s += T(t, x, y, { a: 'end', c: '#c4c4c4', w: 32 }));
  [['短多線', '36.7', 39, '#e0706b', 142, 130, 1], ['中多線', '36.3', 168, YEL, 271, 0, 0], ['長多線', '30.7', 297, '#5b9bdb', 400, 0, 1]].forEach(([a, b, x, c, t, z, dn]) => s += T(a + ':', x, 134, { f: 19, c, w: 58 }) + T(b, x + 60, 135, { c, w: 31 }) + `<path fill="${c}" d="M${t} ${dn ? 130 : 137}h13l-6.500 ${dn ? 7 : -7}z"/>`);
  s += R(47, 149, 134, 305, 'rgba(8,8,8,.85)', 'stroke="#222" stroke-width="2"') + T('2021/09/10', 51, 168, { c: '#c8c8c8', w: 86 });
  [['K數:', '1'], ['開:', '35.30', 1], ['高:', '35.70', 2], ['低:', '33.95', 1], ['收:', '34.45', 1], ['跌:', '-1.05', 1], ['幅:', '-2.96%', 1], ['量:', '895張'], ['量5MA:', '7,946張'], ['三多量:', '11,315張']]
    .forEach(([l, v, g], i) => s += T(l, 51, 195 + 27 * i, { f: 18.500, c: '#c8c8c8' }) + T(v, 178, 195 + 27 * i, { a: 'end', c: g === 1 ? '#62bd18' : g ? '#d43034' : '#c8c8c8', f: 16.500 }));
  s += R(42, 825, 21, 21, YEL, 'rx="2"') + '<path d="M46 835l5 5 8-9" fill="none" stroke="#222" stroke-width="2.500"/>' + T('PL 指標:38.80%', 75, 835, { f: 20, c: '#68a0c8', w: 144 }) + '<path fill="#5b9bdb" d="M236 833h14l-7 7z"/>';
  $('wind').innerHTML = s;
}

/* Intraday trend */
{
  let s = '';
  [176, 186, 214, 272, 300, 333, 359].forEach(y => s += H(y, 107, 1063, '3 6'));
  s += H(385, 107, 1063) + V(1063, 176, 385, '#272727', 3, '3 6');
  s += '<path fill="#4b1d1f" d="M107 244V206L130 210 150 220H218L232 232 355 236 362 244zM575 244l10-6h170l80 6z"/>'
    + '<path d="M107 245H1060" stroke="#858585" stroke-width="3" stroke-dasharray="3 4"/>'
    + L('107,244 114,236 116,205 140,217 160,222 216,225 232,232 355,236 361,245', RED) + L('361,248 385,245 420,242', GREEN) + L('415,241 460,241', RED) + L('460,242 500,246 550,245 577,243', GREEN) + L('577,242 584,239 765,239 840,243', RED) + L('838,243 877,247 925,243', GREEN) + L('922,242 1032,241', RED);
  [['35.67', 186], ['35.04', 213], ['34.40', 243], ['33.76', 273], ['33.13', 300], ['10', 333], ['5', 359], ['0', 384]].forEach(([t, y]) => s += T(t, 100, y, { a: 'end' }));
  const r = '#9c2a2d', g = '#4a9216';
  [[118, 354, r], [157, 380, r], [220, 380, r], [235, 375, r], [259, 369, r], [280, 375, r], [355, 381, r], [364, 369, g], [427, 381, r], [502, 381, g], [514, 381, g], [577, 381, '#666'], [583, 324, r], [730, 381, r], [751, 381, r], [850, 348, '#666'], [877, 324, g], [919, 381, '#666'], [931, 381, r], [949, 381, r], [1021, 381, r], [1033, 381, r]].forEach(([x, y, c]) => s += R(x - 1, y, 3, 387 - y, c));
  [[10, 319], [11, 532], [12, 745], [13, 955]].forEach(([t, x]) => s += T(t, x, 397, { a: 'middle' }));
  s += R(105, 175, 4, 212, '#777') + tag('09:00', 104, 388, 54) + T('34.3', 363, 264, { a: 'middle', c: '#58b016', w: 32 });
  s += R(112, 177, 96, 142, 'rgba(8,8,8,.75)', 'stroke="#222" stroke-width="2"') + T('09:00', 117, 195, { c: '#c8c8c8', w: 43 });
  [['股價:', '34.4'], ['漲:', '0.00'], ['漲幅:', '0.00%'], ['量:', '0張']].forEach(([l, v], i) => s += T(l, 117, 222 + 27 * i, { f: 18.500, c: '#c8c8c8' }) + T(v, 204, 222 + 27 * i, { a: 'end', c: '#c8c8c8' }));
  $('live').innerHTML = s;
}
```
